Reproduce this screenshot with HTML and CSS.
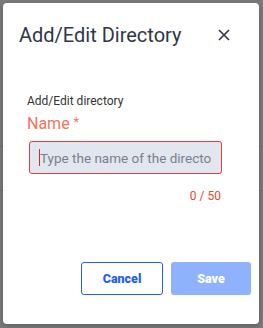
FILE: index.html
```html
<!DOCTYPE html>
<html lang="en">
<head>
    <meta charset="UTF-8">
    <meta name="viewport" content="width=device-width, initial-scale=1.0">
    <title>Add/Edit Directory</title>
    <link rel="stylesheet" href="styles.css">
</head>
<body>
    <div class="backdrop">
        <div class="dialog">
            <div class="dialog-header">
                <h2>Add/Edit Directory</h2>
                <button type="button" class="close-btn" aria-label="Close">
                    <svg width="12" height="12" viewBox="0 0 12 12">
                        <path d="M1 1 L11 11 M11 1 L1 11" stroke="#2d3748" stroke-width="1.6" fill="none"/>
                    </svg>
                </button>
            </div>
            <div class="dialog-body">
                <div class="section-label">Add/Edit directory</div>
                <label class="field-label" for="dir-name">Name <span class="req">*</span></label>
                <div class="input-wrap">
                    <input type="text" id="dir-name" class="field-input" placeholder="Type the name of the directory">
                    <span class="caret"></span>
                </div>
                <div class="counter">0 / 50</div>
            </div>
            <div class="dialog-footer">
                <button type="button" class="btn btn-outline">Cancel</button>
                <button type="button" class="btn btn-primary" disabled>Save</button>
            </div>
        </div>
    </div>
</body>
</html>
```

FILE: styles.css
```css
/* Geral */
body {
    margin: 0;
    padding: 0;
    font-family: Roboto, "Liberation Sans", Arial, sans-serif;
    background: #7b7b7b;
}

.backdrop {
    height: 328px;
    padding: 3px 4px 4px 3px;
    box-sizing: border-box;
    background:
        linear-gradient(#6f6f6f, #6f6f6f) 0 146px / 100% 1px no-repeat,
        linear-gradient(#6f6f6f, #6f6f6f) 0 190px / 100% 1px no-repeat,
        #7b7b7b;
}

.dialog {
    background: #ffffff;
    width: 256px;
    height: 321px;
    border-radius: 4px;
    box-shadow: 0 2px 6px rgba(0, 0, 0, 0.25);
    display: flex;
    flex-direction: column;
    box-sizing: border-box;
}

/* Cabecalho */
.dialog-header {
    display: flex;
    justify-content: space-between;
    align-items: center;
    padding: 20px 23px 0 16px;
}

.dialog-header h2 {
    margin: 0;
    font-size: 20px;
    line-height: 24px;
    font-weight: 400;
    color: #2d3748;
}

.close-btn {
    width: 24px;
    height: 24px;
    padding: 0;
    border: none;
    background: transparent;
    display: flex;
    align-items: center;
    justify-content: center;
    cursor: pointer;
}

/* Corpo */
.dialog-body {
    padding: 46px 37px 0 24px;
    display: flex;
    flex-direction: column;
}

.section-label {
    font-size: 12px;
    line-height: 16px;
    color: #333;
}

.field-label {
    margin-top: 5px;
    font-size: 16px;
    line-height: 20px;
    color: #f4735e;
}

.field-label .req {
    font-size: 13px;
    vertical-align: top;
    line-height: 16px;
}

.input-wrap {
    position: relative;
    margin: 7px 0 0 2px;
}

.field-input {
    width: 100%;
    height: 33px;
    box-sizing: border-box;
    padding: 0 10px;
    font-family: Roboto, "Liberation Sans", Arial, sans-serif;
    font-size: 13.5px;
    color: #333;
    background: #e2e6ee;
    border: 1px solid #ea3a3a;
    border-radius: 3px;
    outline: none;
}

.field-input::placeholder {
    color: #7a808b;
}

.caret {
    position: absolute;
    left: 10px;
    top: 8px;
    width: 1px;
    height: 17px;
    background: #c53030;
}

.counter {
    margin-top: 14px;
    text-align: right;
    font-size: 12px;
    line-height: 16px;
    color: #e5482f;
    padding-right: 1px;
}

/* Rodape */
.dialog-footer {
    margin-top: auto;
    display: flex;
    justify-content: flex-end;
    gap: 8px;
    padding: 0 8px 29px 0;
}

.btn {
    height: 33px;
    font-family: Roboto, "Liberation Sans", Arial, sans-serif;
    font-size: 12.5px;
    font-weight: 900;
    border-radius: 3px;
    box-sizing: border-box;
    cursor: pointer;
}

.btn-outline {
    width: 82px;
    background: #fff;
    color: #1f5ff5;
    border: 1px solid #1f5ff5;
}

.btn-primary {
    width: 80px;
    background: #8fb2fd;
    color: #fff;
    border: none;
}
```
